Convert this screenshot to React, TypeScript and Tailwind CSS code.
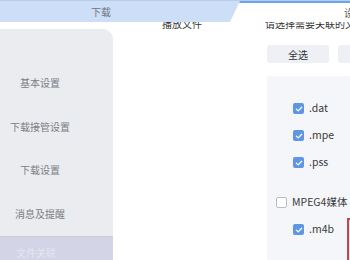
import React from "react";

/* Settings dialog fragment — tabs, side nav, file-association list */

const font = { fontFamily: '"Noto Sans CJK SC", "Noto Sans", sans-serif' };

function Check({ on }: { on: boolean }) {
  if (!on) {
    return <span className="h-[11px] w-[11px] shrink-0 rounded-[2px] border border-[#b9bcc4] bg-white" />;
  }
  return (
    <span className="flex h-[11px] w-[11px] shrink-0 items-center justify-center rounded-[2px] bg-[#5e95e4]">
      <svg width="8" height="8" viewBox="0 0 8 8" fill="none">
        <path d="M1.3 4.1 3.2 5.9 6.7 2.2" stroke="white" strokeWidth="1.3" strokeLinecap="round" strokeLinejoin="round" />
      </svg>
    </span>
  );
}

function Row({ on, label, indent = true }: { on: boolean; label: string; indent?: boolean }) {
  return (
    <div className={`flex h-[27px] items-center gap-[5px] ${indent ? "pl-[26px]" : "pl-[9px]"}`}>
      <Check on={on} />
      <span className="whitespace-nowrap text-[10.5px] leading-none text-[#3a3a3a]">{label}</span>
    </div>
  );
}

const navItems = ["基本设置", "下载接管设置", "下载设置", "消息及提醒"];

export default function App() {
  return (
    <div className="relative h-[260px] w-[350px] overflow-hidden bg-white" style={font}>
      {/* tab bar */}
      <div className="flex h-[22px] w-[350px] border-t border-[#b6cdee] bg-[#cddff6]">
        <div className="flex w-[230px] shrink-0 items-center justify-center pr-[28px] text-[10px] text-[#6f7680]">下载</div>
        <div className="flex w-[170px] shrink-0 items-center border-t-2 border-[#6ea4ea] bg-white pl-[114px] text-[10px] text-[#555] [clip-path:polygon(10px_0,100%_0,100%_100%,0_100%)]">
          <span className="whitespace-nowrap">设置</span>
        </div>
      </div>

      {/* body */}
      <div className="flex h-[238px] w-[500px]">
        <div className="w-[113px] shrink-0 pt-[7px]">
          <div className="flex h-full flex-col rounded-tr-[10px] bg-[#ebecf0] pt-[32px]">
            {navItems.map((t) => (
              <div key={t} className="flex h-[45px] w-[80px] items-center justify-center text-[10px] text-[#7b7d82]">
                {t}
              </div>
            ))}
            <div className="mt-[1px] flex-1 border-t border-[#c9cbdc] bg-[#d3d5e7] pl-[16px] pt-[8px] text-[10px] text-[#e4e5ef]">
              文件关联
            </div>
          </div>
        </div>

        <div className="w-[154px] shrink-0">
          <div className="h-[7px] overflow-hidden pl-[49px]">
            <div className="-mt-[4px] whitespace-nowrap text-[10px] leading-[12px] text-[#333]">播放文件</div>
          </div>
        </div>

        <div className="flex w-[220px] shrink-0 flex-col">
          <div className="-ml-[2px] h-[7px] overflow-hidden">
            <div className="-mt-[4px] whitespace-nowrap text-[10px] leading-[12px] text-[#333]">请选择需要关联的文件类型</div>
          </div>
          <div className="mt-[16px] flex gap-[9px]">
            <div className="flex h-[18px] w-[62px] shrink-0 items-center justify-center rounded-[3px] bg-[#eef0f5] text-[10px] text-[#333]">全选</div>
            <div className="flex h-[18px] w-[62px] shrink-0 items-center justify-center rounded-[3px] bg-[#eef0f5] text-[10px] text-[#333]">反选</div>
          </div>
          <div className="mt-[13px] flex-1 rounded-tl-[3px] bg-[#f5f6fa] pt-[19px]">
            <Row on label=".dat" />
            <Row on label=".mpe" />
            <Row on label=".pss" />
            <div className="h-[13px]" />
            <Row on={false} indent={false} label="MPEG4媒体" />
            <Row on label=".m4b" />
          </div>
        </div>
      </div>

      {/* red highlight overlay */}
      <div className="absolute left-[347px] top-[218px] h-[50px] w-[12px] border-2 border-[#c1464f] bg-[#f7e6e7]" />
    </div>
  );
}
